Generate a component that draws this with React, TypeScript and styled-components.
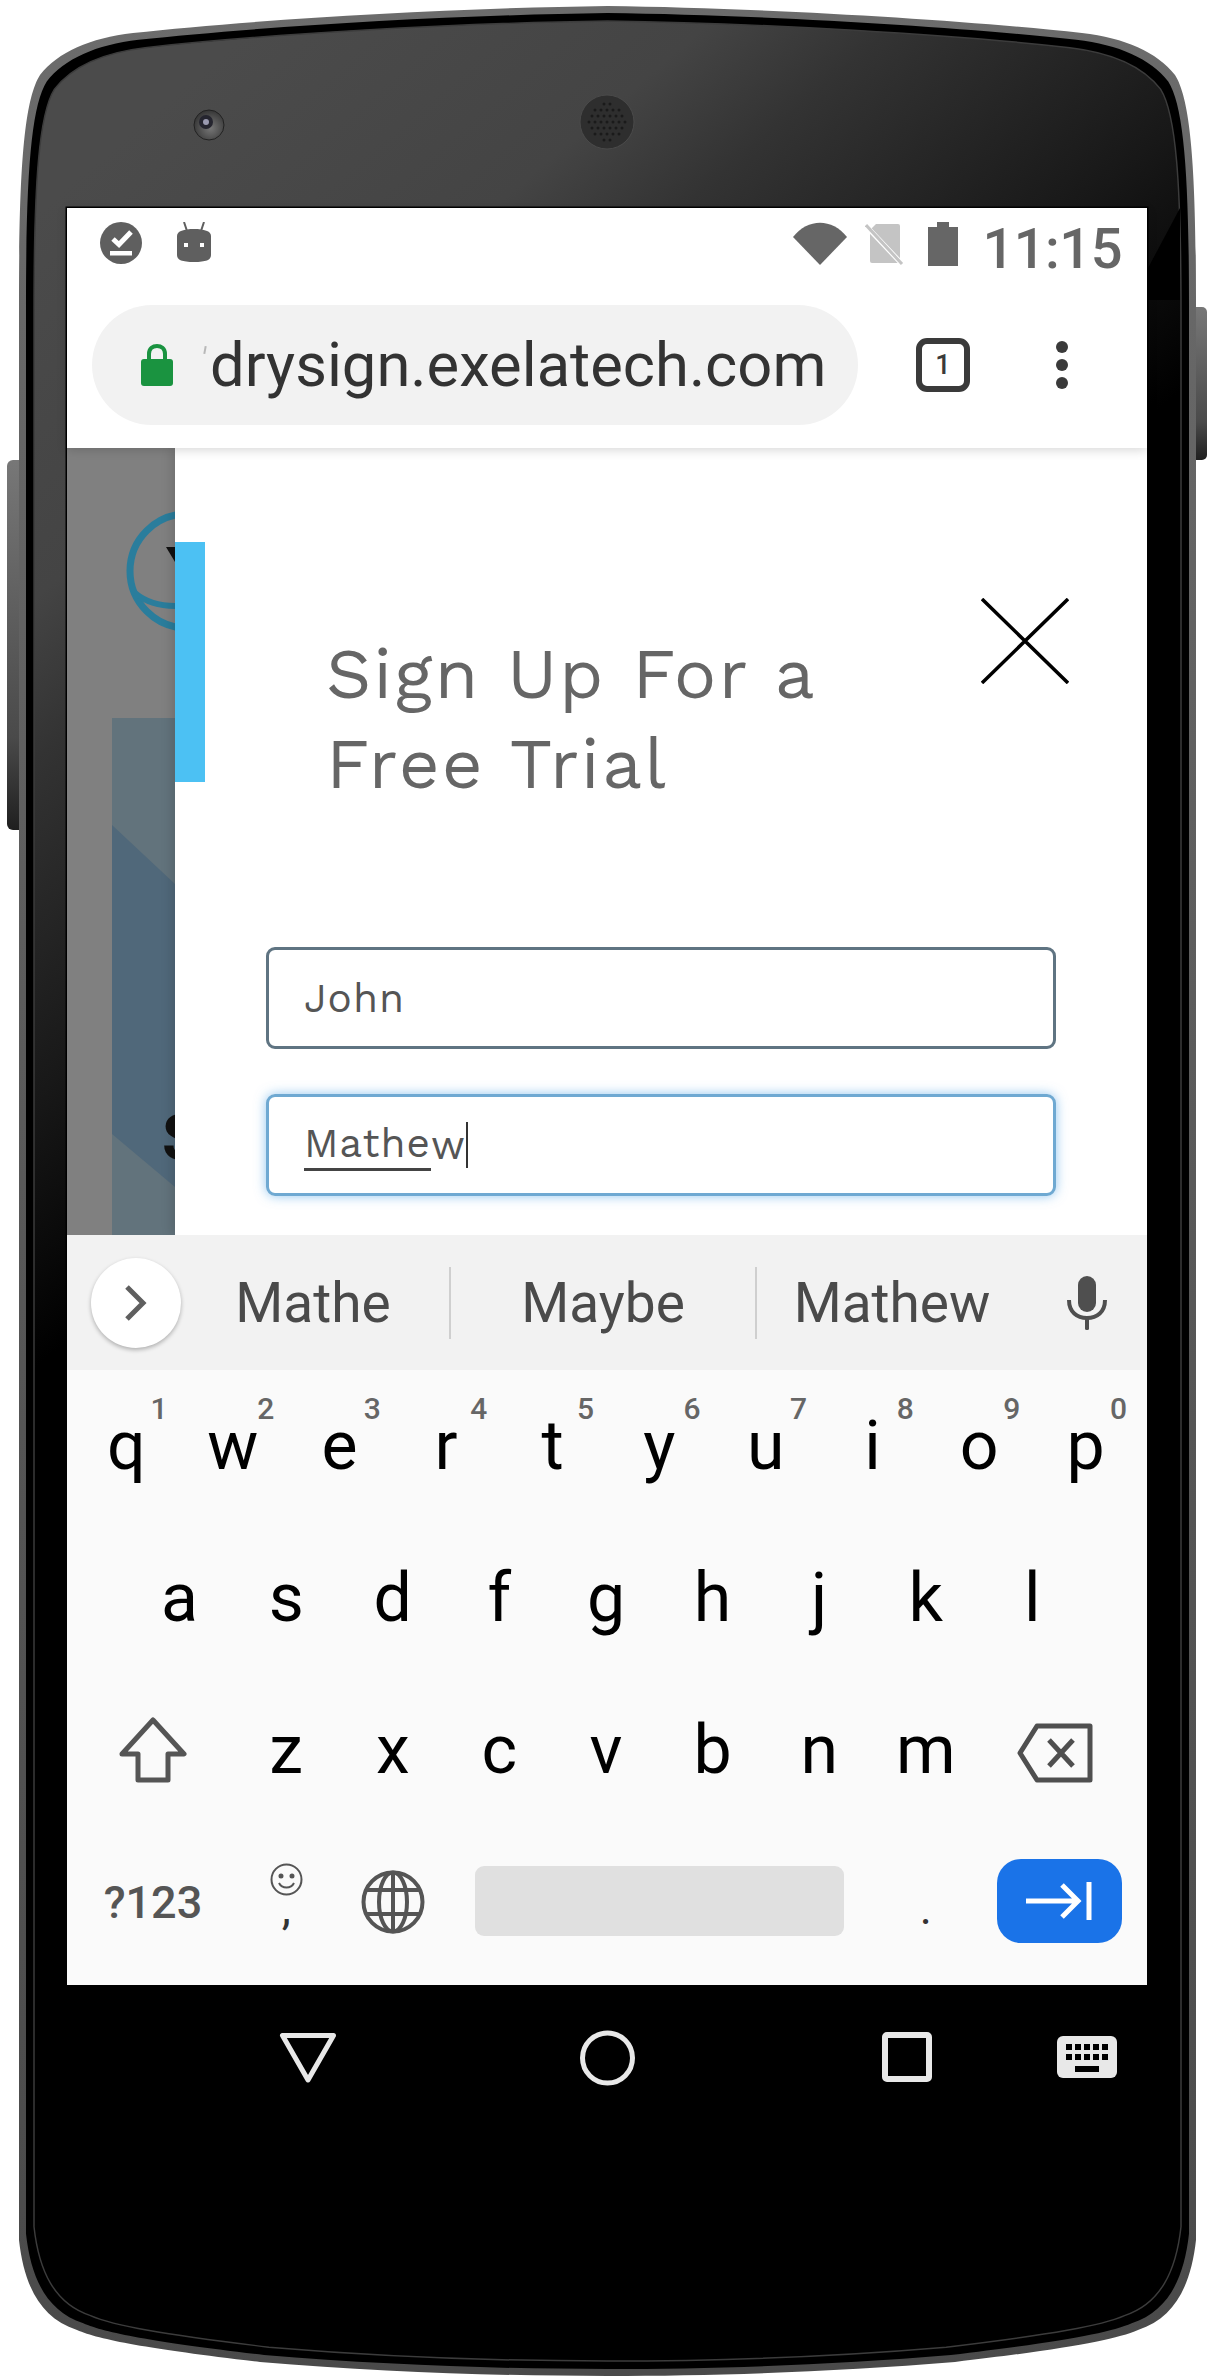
import React from 'react';
import styled, { createGlobalStyle } from 'styled-components';

const GlobalStyle = createGlobalStyle`
  html, body {
    margin: 0;
    padding: 0;
    background: #fff;
    font-family: Roboto, "Liberation Sans", sans-serif;
  }
`;

const Device = styled.div`
  position: relative;
  width: 1215px;
  height: 2380px;
  padding: 208px 0 0 67px;
  box-sizing: border-box;
  overflow: hidden;
`;

const DeviceArt = styled.svg`
  position: absolute;
  left: 0;
  top: 0;
`;

const Screen = styled.div`
  position: relative;
  width: 1080px;
  height: 1777px;
  display: flex;
  flex-direction: column;
  background: #fff;
  box-shadow: 0 0 0 1.5px #000;
`;

const Chrome = styled.div`
  height: 240px;
  flex: none;
  display: flex;
  flex-direction: column;
  box-shadow: 0 2px 10px rgba(0, 0, 0, 0.16);
  position: relative;
  z-index: 2;
  background: #fff;
`;

const StatusBar = styled.div`
  height: 97px;
  display: flex;
  align-items: flex-start;
  padding: 14px 25px 0 33px;
  box-sizing: border-box;
`;

const StatusLeft = styled.div`
  display: flex;
  gap: 34px;
  flex: 1;
`;

const StatusRight = styled.div`
  display: flex;
  align-items: flex-start;
  gap: 18px;
`;

const Clock = styled.span`
  font-size: 56px;
  line-height: 58px;
  font-weight: 500;
  letter-spacing: -0.5px;
  color: #666;
  margin: -2px 0 0 6px;
`;

const Toolbar = styled.div`
  display: flex;
  align-items: center;
  padding-left: 25px;
`;

const Omnibox = styled.div`
  width: 766px;
  height: 120px;
  border-radius: 60px;
  background: #f2f2f2;
  display: flex;
  align-items: center;
  padding-left: 49px;
  box-sizing: border-box;
`;

const UrlMark = styled.span`
  width: 2px;
  height: 8px;
  background: #b8b8b8;
  margin: -30px 4px 0 31px;
  transform: rotate(10deg);
`;

const Url = styled.span`
  font-size: 61.5px;
  color: #333;
  white-space: nowrap;
`;

const TabCount = styled.div`
  width: 54px;
  height: 54px;
  margin-left: 58px;
  border: 6px solid #3a3a3a;
  border-radius: 11px;
  box-sizing: border-box;
  display: flex;
  align-items: center;
  justify-content: center;
  font-size: 27px;
  font-weight: 500;
  color: #3a3a3a;
`;

const MenuDots = styled.div`
  display: flex;
  flex-direction: column;
  gap: 6px;
  margin-left: 86px;
`;

const MenuDot = styled.span`
  width: 12px;
  height: 12px;
  border-radius: 50%;
  background: #3a3a3a;
`;

const WebArea = styled.div`
  height: 787px;
  flex: none;
  display: flex;
`;

const Backdrop = styled.div`
  width: 108px;
  flex: none;
  display: flex;
  flex-direction: column;
  background: #808080;
  overflow: hidden;
`;

const LogoStrip = styled.div`
  height: 270px;
  flex: none;
`;

const BackdropPanel = styled.div`
  position: relative;
  flex: 1;
  margin-left: 45px;
  overflow: hidden;
  background: #62737c;
`;

const BackdropLetter = styled.span`
  position: absolute;
  left: 50px;
  top: 389px;
  font-size: 64px;
  line-height: 64px;
  font-weight: 700;
  color: #111;
`;

const Drawer = styled.div`
  position: relative;
  flex: 1;
  background: #fff;
  padding: 181px 0 0 91px;
  box-sizing: border-box;
  box-shadow: -4px 0 10px rgba(0, 0, 0, 0.12);
`;

const Accent = styled.div`
  position: absolute;
  left: 0;
  top: 94px;
  width: 30px;
  height: 240px;
  background: #4cc1f3;
`;

const CloseIcon = styled.svg`
  position: absolute;
  right: 78px;
  top: 150px;
`;

const Title = styled.h2`
  margin: 0 0 138px 60px;
  font-family: "Work Sans", Inter, sans-serif;
  font-size: 71px;
  line-height: 90px;
  font-weight: 400;
  letter-spacing: 2.2px;
  color: #666;
`;

const Fields = styled.div`
  display: flex;
  flex-direction: column;
  gap: 45px;
  width: 790px;
`;

const Field = styled.div<{ $focused?: boolean }>`
  height: 102px;
  box-sizing: border-box;
  border: 3px solid ${(p) => (p.$focused ? '#6fa9d2' : '#5f7482')};
  border-radius: 9px;
  display: flex;
  align-items: center;
  padding-left: 35px;
  font-family: "Work Sans", Inter, sans-serif;
  font-size: 40.5px;
  font-weight: 400;
  letter-spacing: 1px;
  color: #555;
  box-shadow: ${(p) => (p.$focused ? '0 0 12px rgba(102, 175, 233, 0.7)' : 'none')};
`;

const Composing = styled.span`
  border-bottom: 3px solid #444;
  padding-bottom: 1px;
`;

const Caret = styled.span`
  width: 2px;
  height: 46px;
  background: #333;
`;

const Keyboard = styled.div`
  flex: 1;
  display: flex;
  flex-direction: column;
  background: #fafafa;
`;

const SuggestBar = styled.div`
  height: 135px;
  flex: none;
  display: grid;
  grid-template-columns: 110px 274px 306px 270px 120px;
  align-items: center;
  background: #f2f2f2;
  position: relative;
`;

const ExpandButton = styled.div`
  position: absolute;
  left: 24px;
  top: 23px;
  width: 90px;
  height: 90px;
  border-radius: 50%;
  background: #fff;
  box-shadow: 0 2px 4px rgba(0, 0, 0, 0.28);
  display: flex;
  align-items: center;
  justify-content: center;
`;

const Suggestion = styled.div<{ $divider?: boolean }>`
  height: 72px;
  display: flex;
  align-items: center;
  justify-content: center;
  font-size: 55px;
  color: #4a4a4a;
  border-right: ${(p) => (p.$divider ? '2px solid #cfcfcf' : 'none')};
`;

const MicSlot = styled.div`
  display: flex;
  justify-content: center;
`;

const KeyRows = styled.div`
  flex: 1;
  display: flex;
  flex-direction: column;
  padding: 0 8px 0 6px;
`;

const KeyRow = styled.div<{ $inset?: boolean }>`
  height: 152px;
  flex: none;
  display: flex;
  padding: 0 ${(p) => (p.$inset ? '53.3px' : '0')};
`;

const Key = styled.div<{ $span?: number }>`
  position: relative;
  width: ${(p) => 106.6 * (p.$span ?? 1)}px;
  flex: none;
  display: flex;
  align-items: center;
  justify-content: center;
  font-size: 68px;
  color: #000;
`;

const KeyHint = styled.span`
  position: absolute;
  right: 12px;
  top: 22px;
  font-size: 30px;
  line-height: 34px;
  font-weight: 500;
  color: #666;
`;

const SymbolsLabel = styled.span`
  font-size: 45px;
  font-weight: 500;
  color: #555;
`;

const CommaStack = styled.div`
  display: flex;
  flex-direction: column;
  align-items: center;
  padding-bottom: 22px;
`;

const CommaGlyph = styled.span`
  font-size: 46px;
  line-height: 24px;
  color: #333;
`;

const PeriodGlyph = styled.span`
  font-size: 46px;
  line-height: 46px;
  color: #333;
  margin-top: 12px;
`;

const SpaceBar = styled.div`
  width: 369px;
  height: 70px;
  margin-top: -3px;
  border-radius: 9px;
  background: #e0e0e0;
`;

const NextKey = styled.div`
  width: 125px;
  height: 84px;
  margin-top: -3px;
  border-radius: 24px;
  background: #1a73e8;
  display: flex;
  align-items: center;
  justify-content: center;
`;

const NavBar = styled.div`
  position: absolute;
  left: 67px;
  top: 2020px;
  width: 1080px;
  height: 70px;
`;

const BODY =
  'M607.5 6 C450 8 250 20 133 33 C90 38 58 52 40 75 C24 100 19 170 19 300 L19 2240 C24 2285 40 2318 77 2330 C100 2340 150 2349 260 2362 C380 2372 500 2376 607.5 2376 ' +
  'C715 2376 835 2372 955 2362 C1065 2349 1115 2340 1138 2330 C1175 2318 1191 2285 1196 2240 L1196 300 C1196 170 1191 100 1175 75 C1157 52 1125 38 1082 33 C965 20 765 8 607.5 6 Z';

const inset = (px: number) => {
  const sx = (1177 - px * 2) / 1177;
  const sy = (2370 - px * 2) / 2370;
  return `translate(607.5 1191) scale(${sx} ${sy}) translate(-607.5 -1191)`;
};

const speakerDots = () => {
  const dots: React.ReactElement[] = [];
  for (let row = -3; row <= 3; row++) {
    for (let col = -3; col <= 3; col++) {
      const x = col * 6 + (row % 2 ? 3 : 0);
      const y = row * 6;
      if (x * x + y * y < 20 * 20) {
        dots.push(<circle key={`${row}-${col}`} cx={607 + x} cy={122 + y} r="1.5" fill="#1a1a1a" />);
      }
    }
  }
  return dots;
};

const PhoneBody = () => (
  <DeviceArt width="1215" height="2380" viewBox="0 0 1215 2380">
    <defs>
      <linearGradient id="rim" x1="0" y1="0" x2="0" y2="1">
        <stop offset="0" stopColor="#6c6c6c" />
        <stop offset="0.6" stopColor="#555" />
        <stop offset="1" stopColor="#4a4a4a" />
      </linearGradient>
      <linearGradient id="face" gradientUnits="userSpaceOnUse" x1="200" y1="50" x2="1000" y2="1000">
        <stop offset="0" stopColor="#4b4b4b" />
        <stop offset="0.24" stopColor="#444" />
        <stop offset="0.34" stopColor="#333" />
        <stop offset="0.55" stopColor="#181818" />
        <stop offset="0.72" stopColor="#000" />
      </linearGradient>
      <linearGradient id="button" x1="0" y1="0" x2="0" y2="1">
        <stop offset="0" stopColor="#777" />
        <stop offset="0.75" stopColor="#4a4a4a" />
        <stop offset="1" stopColor="#1f1f1f" />
      </linearGradient>
      <radialGradient id="lens" cx="0.55" cy="0.6" r="0.7">
        <stop offset="0" stopColor="#777" />
        <stop offset="1" stopColor="#2a2a2a" />
      </radialGradient>
    </defs>
    <rect x="7" y="460" width="20" height="370" rx="6" fill="url(#button)" />
    <rect x="1190" y="307" width="17" height="153" rx="5" fill="url(#button)" />
    <path d={BODY} fill="url(#rim)" />
    <path d={BODY} fill="#000" transform={inset(7)} />
    <path d={BODY} fill="url(#face)" stroke="#3c3c3c" strokeWidth="1.5" transform={inset(15)} />
    <path d="M1147 270 L1180 208 L1180 300 L1147 300 Z" fill="#000" />
    <circle cx="209" cy="125" r="15" fill="url(#lens)" stroke="#222" />
    <circle cx="206" cy="122" r="7" fill="#25252f" />
    <circle cx="206" cy="122" r="3" fill="#9a9ab0" />
    <circle cx="607" cy="122" r="27" fill="#2e2e2e" stroke="#4a4a4a" />
    {speakerDots()}
  </DeviceArt>
);

const CheckBadge = () => (
  <svg width="42" height="42" viewBox="0 0 42 42">
    <circle cx="21" cy="21" r="21" fill="#5f5f5f" />
    <path d="M13 17 L19 22.5 L31 10" fill="none" stroke="#fff" strokeWidth="5" />
    <rect x="10" y="29" width="22" height="4.5" fill="#fff" />
  </svg>
);

const AndroidHead = () => (
  <svg width="36" height="42" viewBox="0 0 36 42">
    <path d="M8 0 L11 9 M28 0 L25 9" stroke="#5f5f5f" strokeWidth="2" />
    <path d="M1 14 C1 9 8 7 18 7 C28 7 35 9 35 14 L35 33 C35 38 30 40 18 40 C6 40 1 38 1 33 Z" fill="#5f5f5f" />
    <rect x="8" y="21" width="4" height="4" fill="#fff" />
    <rect x="24" y="21" width="4" height="4" fill="#fff" />
  </svg>
);

const WifiIcon = () => (
  <svg width="54" height="44" viewBox="0 0 54 44">
    <path d="M0 15 C15 -4 39 -4 54 15 L27 43 Z" fill="#666" />
  </svg>
);

const NoSimIcon = () => (
  <svg width="45" height="44" viewBox="0 0 45 44">
    <path d="M5 8 L11 2 L33 2 Q35 2 35 4 L35 39 Q35 41 33 41 L7 41 Q5 41 5 39 Z" fill="#c4c4c4" />
    <path d="M1 4 L38 43" stroke="#fff" strokeWidth="5" />
    <path d="M1 3 L37 42" stroke="#c4c4c4" strokeWidth="3" />
  </svg>
);

const BatteryIcon = () => (
  <svg width="30" height="44" viewBox="0 0 30 44">
    <path d="M0 5 L9 5 L9 0 L21 0 L21 5 L30 5 L30 44 L0 44 Z" fill="#666" />
  </svg>
);

const LockIcon = () => (
  <svg width="32" height="42" viewBox="0 0 32 42">
    <path d="M8 17 L8 10 C8 4 12 2 16 2 C20 2 24 4 24 10 L24 17" fill="none" stroke="#1a9340" strokeWidth="4" />
    <rect x="0" y="15" width="32" height="27" rx="3" fill="#1a9340" />
  </svg>
);

const Chevron = () => (
  <svg width="24" height="36" viewBox="0 0 24 36">
    <path d="M3 2 L19 18 L3 34" fill="none" stroke="#5f5f5f" strokeWidth="5" />
  </svg>
);

const MicIcon = () => (
  <svg width="40" height="54" viewBox="0 0 40 54">
    <rect x="11" y="0" width="18" height="36" rx="9" fill="#4f4f4f" />
    <path d="M2 24 C2 36 10 42 20 42 C30 42 38 36 38 24" fill="none" stroke="#4f4f4f" strokeWidth="4" />
    <rect x="18" y="41" width="4" height="13" rx="1.5" fill="#4f4f4f" />
  </svg>
);

const ShiftIcon = () => (
  <svg width="68" height="66" viewBox="0 0 68 66">
    <path d="M34 3 L65 37 L49 37 L49 63 L19 63 L19 37 L3 37 Z" fill="none" stroke="#555" strokeWidth="5" strokeLinejoin="round" />
  </svg>
);

const BackspaceIcon = () => (
  <svg width="76" height="60" viewBox="0 0 76 60" style={{ margin: '6px 8px 0 0' }}>
    <path d="M20 3 L73 3 L73 57 L20 57 L3 30 Z" fill="none" stroke="#4f4f4f" strokeWidth="5" strokeLinejoin="round" />
    <path d="M32 17 L56 43 M56 17 L32 43" stroke="#4f4f4f" strokeWidth="5" />
  </svg>
);

const GlobeIcon = () => (
  <svg width="64" height="64" viewBox="0 0 64 64" fill="none" stroke="#555" strokeWidth="4">
    <circle cx="32" cy="32" r="29.5" />
    <ellipse cx="32" cy="32" rx="14" ry="29.5" />
    <path d="M32 2 L32 62 M6 20 L58 20 M6 44 L58 44" />
  </svg>
);

const SmileIcon = () => (
  <svg width="33" height="33" viewBox="0 0 33 33" fill="none" stroke="#555" strokeWidth="2">
    <circle cx="16.5" cy="16.5" r="15" />
    <circle cx="11" cy="13" r="1.5" fill="#555" />
    <circle cx="22" cy="13" r="1.5" fill="#555" />
    <path d="M9 20 C12 26 21 26 24 20" />
  </svg>
);

const TabArrow = () => (
  <svg width="66" height="38" viewBox="0 0 66 38" fill="none" stroke="#fff" strokeWidth="5">
    <path d="M0 19 L52 19 M36 3 L52 19 L36 35" />
    <path d="M63 0 L63 38" />
  </svg>
);

const NavIcons = () => (
  <svg width="1080" height="70" viewBox="0 0 1080 70">
    <path d="M215.5 15.5 L266.5 15.5 L241 60 Z" fill="none" stroke="#e8e8e8" strokeWidth="5" strokeLinejoin="round" />
    <circle cx="540.5" cy="38" r="25" fill="none" stroke="#e8e8e8" strokeWidth="5" />
    <rect x="818" y="15" width="44" height="44" rx="2" fill="none" stroke="#e8e8e8" strokeWidth="6" />
    <rect x="990" y="16" width="60" height="42" rx="6" fill="#e8e8e8" />
    {[0, 1, 2, 3, 4].map((i) => (
      <g key={i} fill="#000">
        <rect x={999 + i * 9} y="24" width="6" height="6" />
        <rect x={999 + i * 9} y="34" width="6" height="6" />
      </g>
    ))}
    <rect x="1008" y="46" width="24" height="6" fill="#000" />
  </svg>
);

const rowOne = ['q', 'w', 'e', 'r', 't', 'y', 'u', 'i', 'o', 'p'];
const rowTwo = ['a', 's', 'd', 'f', 'g', 'h', 'j', 'k', 'l'];
const rowThree = ['z', 'x', 'c', 'v', 'b', 'n', 'm'];
const suggestions = ['Mathe', 'Maybe', 'Mathew'];

const App: React.FC = () => {
  return (
    <Device>
      <GlobalStyle />
      <PhoneBody />
      <Screen>
        <Chrome>
          <StatusBar>
            <StatusLeft>
              <CheckBadge />
              <AndroidHead />
            </StatusLeft>
            <StatusRight>
              <WifiIcon />
              <NoSimIcon />
              <BatteryIcon />
              <Clock>11:15</Clock>
            </StatusRight>
          </StatusBar>
          <Toolbar>
            <Omnibox>
              <LockIcon />
              <UrlMark />
              <Url>drysign.exelatech.com</Url>
            </Omnibox>
            <TabCount>1</TabCount>
            <MenuDots>
              <MenuDot />
              <MenuDot />
              <MenuDot />
            </MenuDots>
          </Toolbar>
        </Chrome>
        <WebArea>
          <Backdrop>
            <LogoStrip>
              <svg width="108" height="270" viewBox="0 0 108 270">
                <circle cx="120" cy="123" r="57" fill="none" stroke="#2a7d9c" strokeWidth="7" />
                <path d="M68 145 C80 155 96 158 108 158" fill="none" stroke="#2a7d9c" strokeWidth="6" />
                <path d="M99 99 L108 99 L108 114 Z" fill="#111" />
              </svg>
            </LogoStrip>
            <BackdropPanel>
              <svg width="63" height="516" viewBox="0 0 63 516">
                <path d="M0 107 L63 166 L63 469 L0 416 Z" fill="#50687a" />
              </svg>
              <BackdropLetter>S</BackdropLetter>
            </BackdropPanel>
          </Backdrop>
          <Drawer>
            <Accent />
            <CloseIcon width="88" height="86" viewBox="0 0 88 86">
              <path d="M1 1 L87 85 M87 1 L1 85" stroke="#000" strokeWidth="3.5" />
            </CloseIcon>
            <Title>
              Sign Up For a
              <br />
              Free Trial
            </Title>
            <Fields>
              <Field>John</Field>
              <Field $focused>
                <Composing>Mathe</Composing>w
                <Caret />
              </Field>
            </Fields>
          </Drawer>
        </WebArea>
        <Keyboard>
          <SuggestBar>
            <ExpandButton>
              <Chevron />
            </ExpandButton>
            <span />
            {suggestions.map((word, i) => (
              <Suggestion key={word} $divider={i < 2}>
                {word}
              </Suggestion>
            ))}
            <MicSlot>
              <MicIcon />
            </MicSlot>
          </SuggestBar>
          <KeyRows>
            <KeyRow>
              {rowOne.map((letter, i) => (
                <Key key={letter}>
                  {letter}
                  <KeyHint>{(i + 1) % 10}</KeyHint>
                </Key>
              ))}
            </KeyRow>
            <KeyRow $inset>
              {rowTwo.map((letter) => (
                <Key key={letter}>{letter}</Key>
              ))}
            </KeyRow>
            <KeyRow>
              <Key $span={1.5}>
                <ShiftIcon />
              </Key>
              {rowThree.map((letter) => (
                <Key key={letter}>{letter}</Key>
              ))}
              <Key $span={1.5}>
                <BackspaceIcon />
              </Key>
            </KeyRow>
            <KeyRow>
              <Key $span={1.5}>
                <SymbolsLabel>?123</SymbolsLabel>
              </Key>
              <Key>
                <CommaStack>
                  <SmileIcon />
                  <CommaGlyph>,</CommaGlyph>
                </CommaStack>
              </Key>
              <Key>
                <GlobeIcon />
              </Key>
              <Key $span={4}>
                <SpaceBar />
              </Key>
              <Key>
                <PeriodGlyph>.</PeriodGlyph>
              </Key>
              <Key $span={1.5}>
                <NextKey>
                  <TabArrow />
                </NextKey>
              </Key>
            </KeyRow>
          </KeyRows>
        </Keyboard>
      </Screen>
      <NavBar>
        <NavIcons />
      </NavBar>
    </Device>
  );
};

export default App;
